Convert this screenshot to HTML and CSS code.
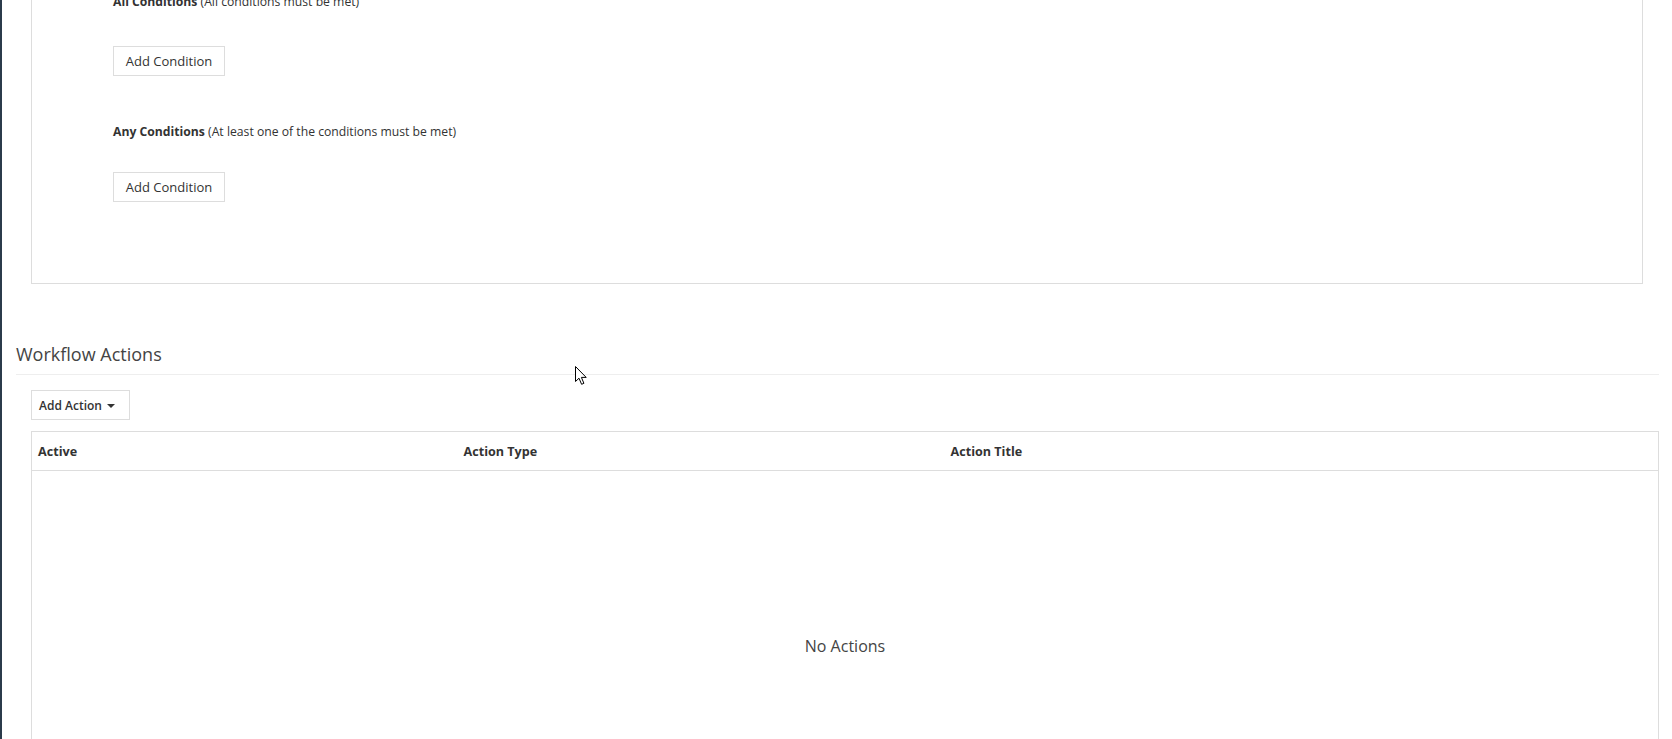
FILE: index.html
```html
<!DOCTYPE html>
<html lang="en">
    <head>
        <meta charset="UTF-8">
        <meta name="viewport" content="width=device-width, initial-scale=1.0">
        <title>Workflow Type</title>
        <link rel="stylesheet" href="styles.css">
    </head>
    <body>
        <div class="edge"></div>
        <div class="main">
            <div class="panel">
                <div class="cond-label"><b>All Conditions</b> (All conditions must be met)</div>
                <button class="btn cond-btn">Add Condition</button>
                <div class="cond-label any"><b>Any Conditions</b> (At least one of the conditions must be met)</div>
                <button class="btn cond-btn">Add Condition</button>
            </div>

            <h2 class="legend">Workflow Actions</h2>

            <div class="actions">
                <button class="btn add-action">Add Action <span class="caret"></span></button>
                <table class="grid">
                    <thead>
                        <tr>
                            <th class="col-active">Active</th>
                            <th class="col-type">Action Type</th>
                            <th>Action Title</th>
                        </tr>
                    </thead>
                    <tbody>
                        <tr>
                            <td colspan="3" class="empty">No Actions</td>
                        </tr>
                    </tbody>
                </table>
            </div>
        </div>

        <svg class="cursor" width="13" height="20" viewBox="0 0 13 20">
            <path d="M0.5 0.5 L0.5 15.5 L4 12.2 L6.6 18.3 L8.9 17.3 L6.4 11.4 L11.2 11.4 Z" fill="#fff" stroke="#000" stroke-width="1"/>
        </svg>
    </body>
</html>
```

FILE: styles.css
```css
*{
    margin: 0;
    padding: 0;
    box-sizing: border-box;
}
html, body{
    height: 100%;
    overflow: hidden;
}
body{
    display: flex;
    background-color: #fff;
    font-family: "Open Sans", "Liberation Sans", sans-serif;
    font-size: 12px;
    color: #333;
}
.edge{
    width: 2px;
    flex-shrink: 0;
    background-color: #2b3b4b;
}
.main{
    flex: 1;
    padding: 0 13px 0 14px;
}
.panel{
    margin: -34px 16px 0 15px;
    padding: 26px 0 81px 81px;
    border: 1px solid #ddd;
}
.cond-label{
    line-height: 18px;
    font-size: 12.2px;
}
.cond-label b{
    font-weight: 700;
}
.cond-label.any{
    margin-top: 47px;
}
.btn{
    display: block;
    height: 30px;
    padding: 0 11px;
    border: 1px solid #ddd;
    background-color: #fff;
    font-family: inherit;
    font-size: 12px;
    color: #333;
}
.cond-btn{
    margin-top: 35px;
    width: 112px;
    padding: 0;
    text-align: center;
    font-size: 13px;
}
.cond-label.any + .cond-btn{
    margin-top: 31px;
}
.legend{
    margin-top: 56px;
    padding-bottom: 6px;
    border-bottom: 1px solid #eee;
    font-size: 18px;
    font-weight: 400;
    line-height: 28px;
    color: #444;
}
.actions{
    padding-left: 15px;
}
.add-action{
    margin-top: 15px;
    width: 99px;
    padding: 0 7px;
    text-align: left;
    font-weight: 600;
}
.caret{
    display: inline-block;
    margin-left: 2px;
    vertical-align: middle;
    border-top: 4px solid #333;
    border-left: 4px solid transparent;
    border-right: 4px solid transparent;
}
.grid{
    width: 100%;
    margin-top: 11px;
    border: 1px solid #ddd;
    border-collapse: collapse;
}
.grid th{
    padding: 11px 5px 10px 6px;
    border-bottom: 1px solid #ddd;
    text-align: left;
    font-weight: 700;
    font-size: 12.6px;
    line-height: 17px;
}
.col-active{
    width: 426px;
}
.col-type{
    width: 487px;
}
.empty{
    padding: 165px 0 170px;
    text-align: center;
    font-size: 16px;
    line-height: 21px;
    color: #444;
}
.cursor{
    position: absolute;
    left: 575px;
    top: 366px;
}
```
